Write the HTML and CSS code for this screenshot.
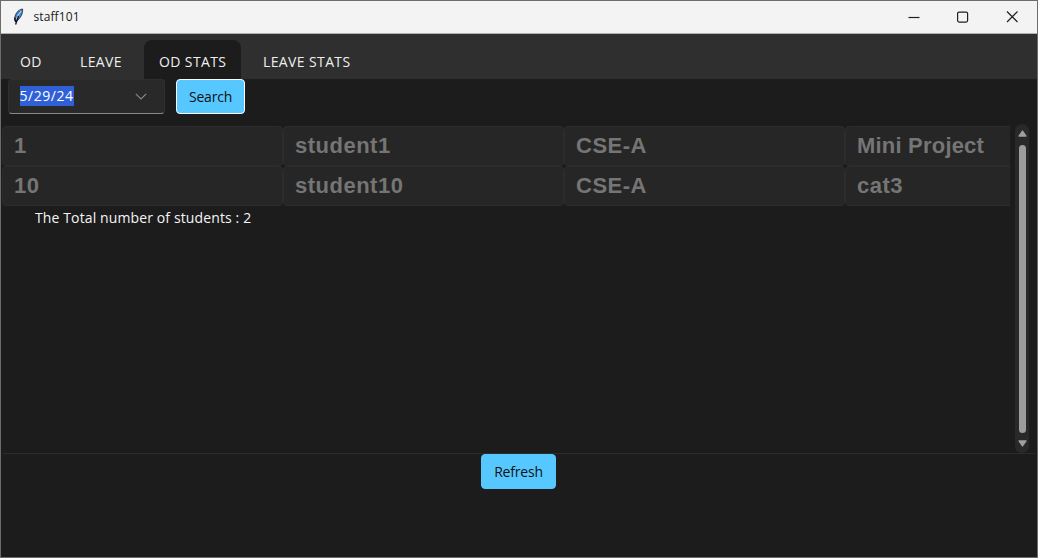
FILE: index.html
```html
<!DOCTYPE html>
<html lang="en">
<head>
<meta charset="utf-8">
<title>staff101</title>
<link rel="stylesheet" href="styles.css">
</head>
<body>
<div class="window">
  <header class="titlebar">
    <svg class="feather" width="12" height="18" viewBox="0 0 12 18">
      <path d="M10.600 1C6.200 1.500 2 6.500 2.800 12.500L4.500 13.200C8.500 10.500 11 5.500 10.600 1Z" fill="#3f82cc" stroke="#26333f" stroke-width=".9"/>
      <path d="M9.300 2.800C6.700 5.500 5 8.500 4.300 11.500" fill="none" stroke="#a9d1ef" stroke-width="1.200"/>
      <path d="M6.500 8L3.600 16.500M2.600 9.500L3.600 14" fill="none" stroke="#111" stroke-width="1.300"/>
    </svg>
    <span class="title">staff101</span>
    <svg class="controls" width="112" height="14" viewBox="0 0 112 14" fill="none" stroke="#202020" stroke-width="1.200">
      <path d="M1.500 7.500H12.500"/>
      <rect x="50.600" y="2.100" width="10" height="10" rx="1.500"/>
      <path d="M100 1.500L110.500 12M110.500 1.500L100 12"/>
    </svg>
  </header>
  <nav class="tabs">
    <span class="tab tab-od">OD</span>
    <span class="tab tab-leave">LEAVE</span>
    <span class="tab tab-active">OD STATS</span>
    <span class="tab tab-leave-stats">LEAVE STATS</span>
  </nav>
  <div class="toolbar">
    <div class="date-entry">
      <span class="selected">5/29/24</span>
      <svg width="12" height="7" viewBox="0 0 12 7" fill="none" stroke="#8a8a8a" stroke-width="1.100"><path d="M.8.8L6 6L11.200.8"/></svg>
    </div>
    <button class="button button-focus">Search</button>
  </div>
  <main class="content">
    <div class="results">
      <div class="grid">
        <div class="cell">1</div><div class="cell">student1</div><div class="cell">CSE-A</div><div class="cell cell-reason">Mini Project</div>
        <div class="cell">10</div><div class="cell">student10</div><div class="cell">CSE-A</div><div class="cell">cat3</div>
      </div>
      <div class="total">The Total number of students : 2</div>
    </div>
    <div class="scrollbar">
      <svg width="9" height="7" viewBox="0 0 9 7"><path d="M4.500 1L8 6H1Z" fill="#a0a0a0" stroke="#a0a0a0" stroke-width="1.300" stroke-linejoin="round"/></svg>
      <div class="thumb"></div>
      <svg width="9" height="7" viewBox="0 0 9 7"><path d="M1 1H8L4.500 6Z" fill="#a0a0a0" stroke="#a0a0a0" stroke-width="1.300" stroke-linejoin="round"/></svg>
    </div>
  </main>
  <footer class="footer"><button class="button button-refresh">Refresh</button></footer>
</div>
</body>
</html>
```

FILE: styles.css
```css
* { box-sizing: border-box; }
body { margin: 0; background: #1c1c1c; font-family: "Open Sans", "Noto Sans", sans-serif; }
.window { width: 1038px; height: 558px; border: 1px solid #6c6c6c; background: #1c1c1c; display: flex; flex-direction: column; overflow: hidden; }
.titlebar { height: 33px; flex: none; background: #f3f3f3; border-bottom: 1px solid #b0b0b0; display: flex; align-items: center; padding: 0 18px 0 11px; }
.feather { margin-right: 9.5px; }
.title { font-size: 12px; line-height: 18px; color: #1a1a1a; letter-spacing: 0.1px; }
.controls { margin-left: auto; }
.tabs { height: 45px; flex: none; background: #2f2f2f; display: flex; align-items: flex-end; }
.tab { height: 39px; line-height: 43px; font-size: 14px; letter-spacing: 0.38px; color: #efefef; white-space: nowrap; }
.tab-od { width: 59px; padding-left: 19px; }
.tab-leave { width: 84px; padding-left: 20px; }
.tab-active { width: 97px; padding-left: 15px; background: #1c1c1c; border-radius: 8px 8px 0 0; }
.tab-leave-stats { padding-left: 22px; }
.toolbar { height: 45px; flex: none; display: flex; gap: 11px; padding-left: 7px; align-items: flex-start; }
.date-entry { width: 157px; height: 35px; background: #292929; border: 1px solid #2f2f2f; border-bottom-color: #898989; border-radius: 4px; display: flex; align-items: center; justify-content: space-between; padding: 0 17px 1px 10.5px; }
.selected { background: #2f60d8; color: #fff; font-size: 14px; line-height: 20px; letter-spacing: 0.55px; }
.button { height: 35px; border: 1px solid #57c8ff; border-radius: 4px; background: #57c8ff; color: #101010; font: 14px "Open Sans", "Noto Sans", sans-serif; padding: 0; text-align: center; letter-spacing: -0.2px; }
.button-focus { width: 69px; border-color: #fff; }
.content { height: 329px; flex: none; display: flex; }
.results { width: 1009px; padding: 2px 0 0 1px; overflow: hidden; }
.grid { display: grid; grid-template-columns: repeat(4, 281px); grid-auto-rows: 40px; }
.cell { background: #262626; border: 1px solid #2c2c2c; border-radius: 4px; padding-left: 11px; font: bold 22px/38px "Liberation Sans", Arial, sans-serif; color: #757575; letter-spacing: 0.5px; }
.cell-reason { letter-spacing: 0.2px; }
.total { padding-left: 33px; font-size: 14px; line-height: 24px; color: #f5f5f5; white-space: nowrap; letter-spacing: 0.12px; }
.scrollbar { width: 14px; margin-left: 5px; background: #292929; border-radius: 7px; display: flex; flex-direction: column; align-items: center; padding: 6px 0; }
.thumb { width: 7px; flex: 1; margin: 8px 0 7px; background: #9c9c9c; border-radius: 4px; }
.footer { height: 104px; flex: none; border-top: 1px solid #2c2c2c; display: flex; align-items: flex-start; margin: 0 2px; padding-left: 478px; }
.button-refresh { width: 75px; }
```
